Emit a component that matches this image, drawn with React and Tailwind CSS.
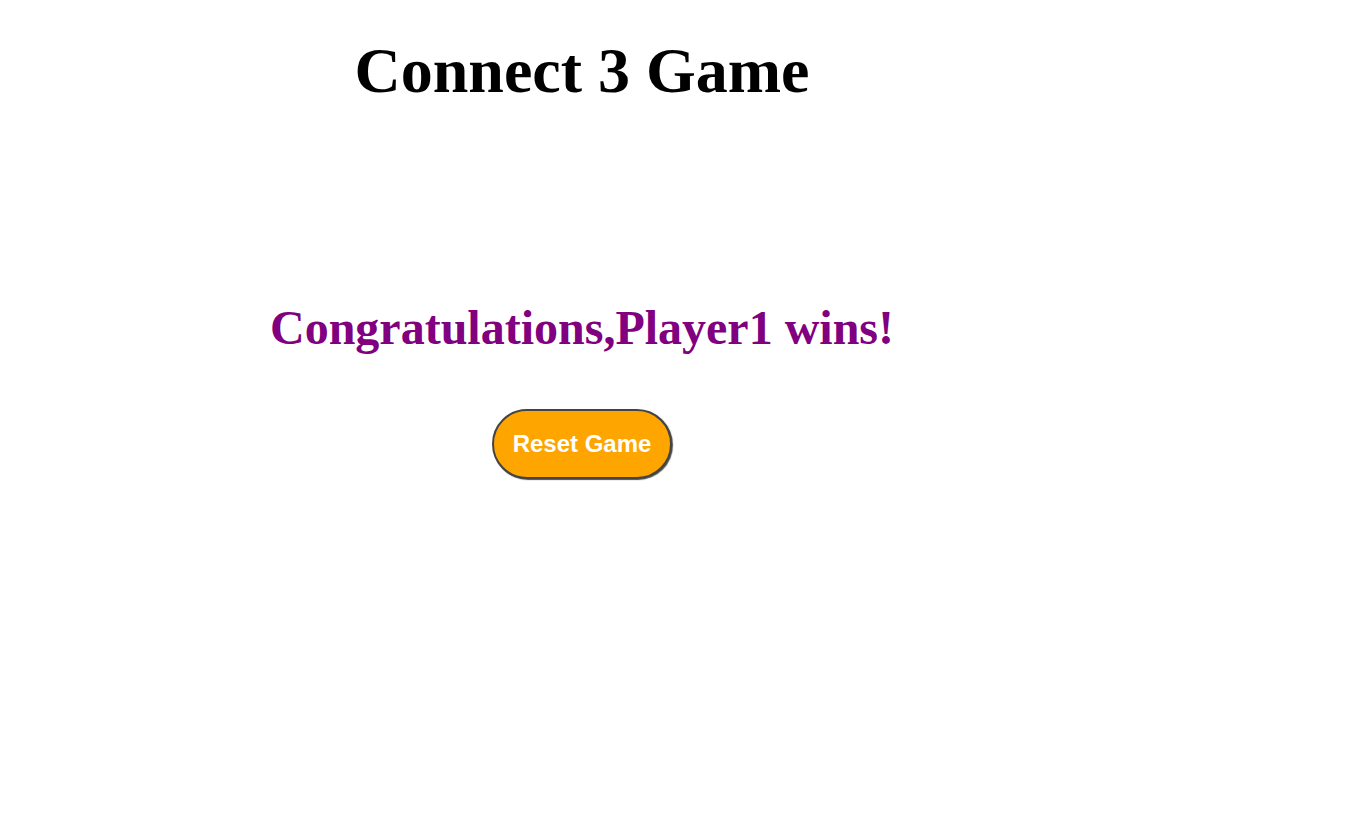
export default function App() {
  return (
    <div className="min-h-screen bg-white">
      <div className="flex w-[1164px] flex-col items-center">
        <h1 className="mt-[34px] text-[64px] font-bold leading-[74px] text-black [font-family:'Liberation_Serif',serif]">
          Connect 3 Game
        </h1>
        <h2 className="mt-[192px] text-[48px] font-bold leading-[56px] text-[#800080] [font-family:'Liberation_Serif',serif]">
          Congratulations,Player1 wins!
        </h2>
        <button className="mt-[53px] rounded-full border-2 border-[#444] bg-[#ffa500] px-[19px] py-[19px] text-[24px] font-bold leading-[28px] text-white shadow-[1px_1px_1px_rgba(0,0,0,0.7)] [font-family:'Liberation_Sans',sans-serif]">
          Reset Game
        </button>
      </div>
    </div>
  );
}
